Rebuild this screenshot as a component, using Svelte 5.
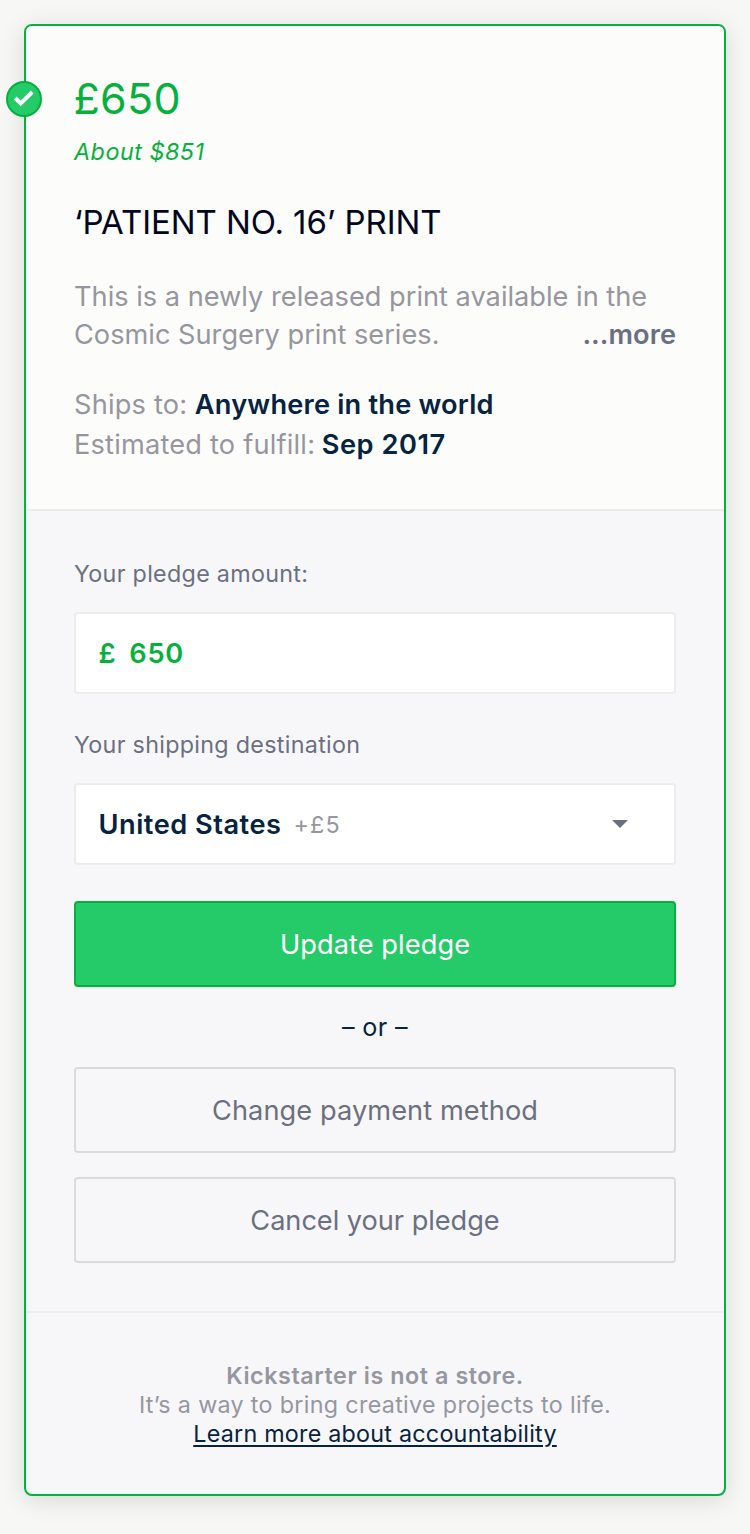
<script>
  let amount = $state('650');
</script>

<main>
  <article class="card">
    <span class="badge">
      <svg viewBox="0 0 36 36" width="36" height="36" aria-hidden="true">
        <circle cx="18" cy="18" r="17" />
        <path d="M9.3 17 14.7 22.4 26.2 11" />
      </svg>
    </span>

    <section class="reward">
      <h2 class="price">£650</h2>
      <p class="about">About $851</p>
      <h3 class="title">‘PATIENT NO. 16’ PRINT</h3>
      <div class="desc">
        <p>This is a newly released print available in the</p>
        <div class="last">
          <p>Cosmic Surgery print series.</p>
          <b class="more">...more</b>
        </div>
      </div>
      <div class="facts">
        <div class="fact"><span>Ships to:</span><b>Anywhere in the world</b></div>
        <div class="fact"><span>Estimated to fulfill:</span><b class="date">Sep 2017</b></div>
      </div>
    </section>

    <section class="pledge">
      <p class="label">Your pledge amount:</p>
      <div class="field amount"><span>£</span><span>{amount}</span></div>
      <p class="label second">Your shipping destination</p>
      <div class="field select">
        <b>United States</b>
        <span class="extra">+£5</span>
        <svg class="caret" viewBox="0 0 16 8" width="16" height="8" aria-hidden="true">
          <path d="M0 0H16L8 8Z" />
        </svg>
      </div>
      <button class="btn primary">Update pledge</button>
      <p class="or">– or –</p>
      <button class="btn change">Change payment method</button>
      <button class="btn cancel">Cancel your pledge</button>
    </section>

    <footer>
      <b>Kickstarter is not a store.</b>
      <span>It’s a way to bring creative projects to life.</span>
      <a href="#accountability">Learn more about accountability</a>
    </footer>
  </article>
</main>

<style>
  :global(body) {
    margin: 0;
    background: #f7f7f5;
  }
  main {
    box-sizing: border-box;
    height: 1534px;
    padding: 24px;
    font-family: Inter, "Liberation Sans", sans-serif;
    overflow: hidden;
  }
  h2, h3, p {
    margin: 0;
    font-weight: 400;
  }
  b {
    font-weight: 600;
  }
  .card {
    position: relative;
    box-sizing: border-box;
    height: 1472px;
    border: 2px solid #06b03c;
    border-radius: 8px;
    background: #f7f7fa;
    box-shadow: 0 4px 24px rgba(0, 0, 0, 0.13);
  }
  .badge {
    position: absolute;
    left: -20px;
    top: 55px;
  }
  .badge svg {
    display: block;
  }
  .badge circle {
    fill: #25cb68;
    stroke: #06b03c;
    stroke-width: 2;
  }
  .badge path {
    fill: none;
    stroke: #fff;
    stroke-width: 4;
  }
  .reward {
    padding: 48px 48px 44px;
    border-bottom: 2px solid #ececec;
    border-radius: 6px 6px 0 0;
    background: #fcfcfa;
  }
  .price {
    margin-left: -0.5px;
    font-size: 43px;
    line-height: 48px;
    letter-spacing: 0.3px;
    color: #06b03c;
  }
  .about {
    margin: 15px 0 35px;
    font-size: 23.3px;
    line-height: 30px;
    letter-spacing: 0.52px;
    font-style: italic;
    color: #06b03c;
  }
  .title {
    font-size: 33px;
    line-height: 40px;
    letter-spacing: -0.08px;
    color: #020621;
  }
  .desc {
    margin-top: 36px;
    font-size: 27.2px;
    line-height: 38px;
    color: #96969f;
  }
  .last {
    display: flex;
    justify-content: space-between;
  }
  .more {
    letter-spacing: 0.04px;
    color: #6b7080;
  }
  .facts {
    margin-top: 31px;
    font-size: 27.2px;
    line-height: 40px;
    letter-spacing: 0.2px;
    color: #96969f;
  }
  .fact {
    display: flex;
    gap: 7.5px;
  }
  .fact b {
    color: #062340;
  }
  .fact .date {
    margin-left: -1px;
    letter-spacing: 0.55px;
  }
  .pledge {
    display: flex;
    flex-direction: column;
    padding: 48px 48px 48px;
    border-bottom: 2px solid #ececee;
  }
  .label {
    font-size: 23.3px;
    line-height: 30px;
    letter-spacing: 0.3px;
    color: #6b7080;
  }
  .second {
    margin-top: 36px;
  }
  .field {
    box-sizing: border-box;
    height: 82px;
    margin-top: 23px;
    padding: 2px 22.5px 0;
    border: 2px solid #ececec;
    border-radius: 4px;
    background: #fff;
    display: flex;
    align-items: center;
    font-size: 27.2px;
    font-weight: 600;
    line-height: 40px;
  }
  .amount {
    gap: 13px;
    letter-spacing: 0.7px;
    color: #06b03c;
  }
  .select b {
    letter-spacing: 0.51px;
    color: #062340;
  }
  .extra {
    margin-left: 12px;
    font-size: 23.3px;
    font-weight: 400;
    letter-spacing: 1.2px;
    color: #96969f;
  }
  .caret {
    margin: 0 23.5px 2px auto;
    fill: #6b7080;
  }
  .btn {
    box-sizing: border-box;
    height: 86px;
    padding: 2px 0 0;
    border: 2px solid #dbdbde;
    border-radius: 4px;
    background: transparent;
    font-family: inherit;
    font-size: 27.2px;
    line-height: 40px;
    letter-spacing: 0.08px;
    color: #6b7080;
  }
  .primary {
    margin-top: 36px;
    border-color: #06b03c;
    background: #25cb68;
    color: #fff;
  }
  .cancel {
    margin-top: 24px;
    letter-spacing: -0.04px;
  }
  .or {
    margin: 25px 0;
    font-size: 25.2px;
    line-height: 30px;
    letter-spacing: 0.33px;
    text-align: center;
    color: #062340;
  }
  footer {
    display: flex;
    flex-direction: column;
    align-items: center;
    padding-top: 48px;
    font-size: 23.3px;
    line-height: 29px;
    letter-spacing: 0.32px;
    color: #96969f;
  }
  footer b {
    letter-spacing: 0.57px;
  }
  footer a {
    letter-spacing: 0.24px;
    color: #062340;
    text-underline-offset: 3px;
    text-decoration-thickness: 2px;
  }
</style>
